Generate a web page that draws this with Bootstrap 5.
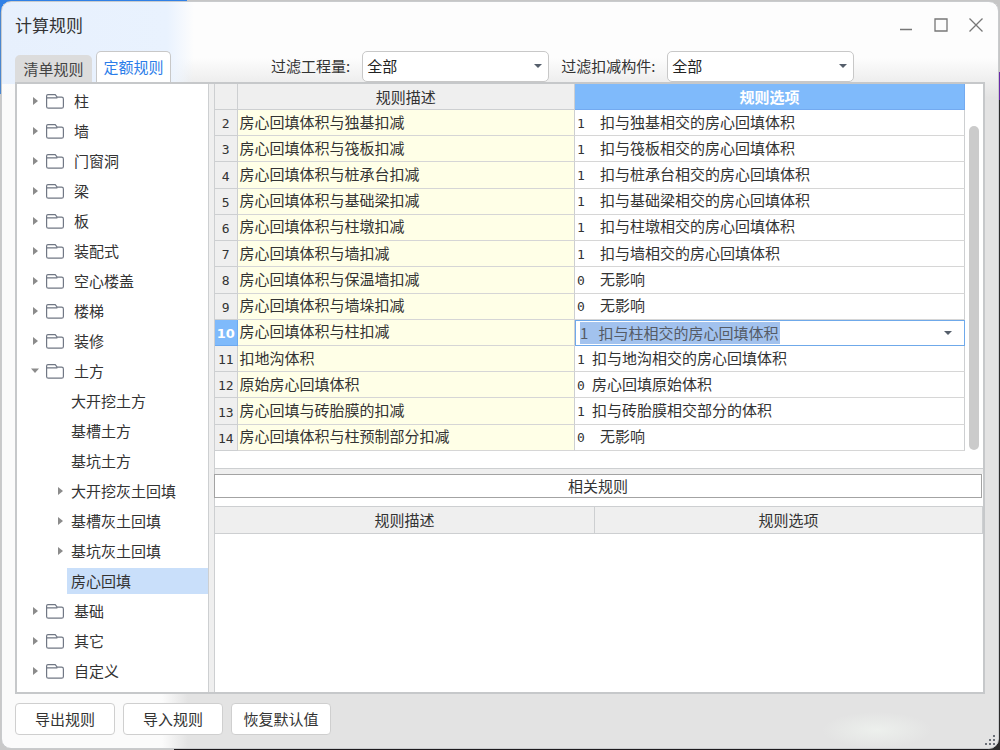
<!DOCTYPE html>
<html lang="zh-CN">
<head>
<meta charset="utf-8">
<meta name="viewport" content="width=device-width, initial-scale=1">
<title>计算规则</title>
<link href="https://cdn.jsdelivr.net/npm/bootstrap@5.3.0/dist/css/bootstrap.min.css" rel="stylesheet">
<style>
:root { --line: #cdcfd1; --frame: #c6c8ca; --head: #efefef; --accent: #7fbafb; --ink: #333; }
body {
  font: 15px/20px "Noto Sans CJK SC", sans-serif; color: var(--ink); min-height: 100vh; padding: 1px;
  background:
    linear-gradient(90deg, #2f80e6 187px, #c6c6c6 187px) top / 100% 12px no-repeat,
    linear-gradient(#4a86cf 88px, #c9c9c9 88px) left / 12px calc(100% - 12px) no-repeat,
    linear-gradient(#c6c6c6 72px, #6a2aa8 72px, #6a2aa8 100px, #2a2a2a 100px) right / 12px 100% no-repeat,
    linear-gradient(90deg, #c9c9c9 174px, #1d1a1d 174px);
}
.dialog-window {
  border: 1px solid #c9cbcd; border-radius: 10px;
  background:
    radial-gradient(closest-side, #edf0ed, rgba(237,240,237,0)) 820px 100% / 110px 36px no-repeat,
    linear-gradient(90deg, #e7f0fd, #e9f2fe 165px, rgba(255,255,255,0) 192px) top left / 200px 60px no-repeat,
    linear-gradient(90deg, #e7f0fd, #e9f2fe 165px, rgba(255,255,255,0) 192px) 0 60px / 200px 22px no-repeat,
    linear-gradient(#fdfdfd 56px, rgba(253,253,253,0) 96px) top / 100% 110px no-repeat,
    linear-gradient(90deg, #fbfbfb 160px, #e3e3e3 186px);
}
.title-row { height: 48px; padding: 0 15px 2px 13px; }
.title-row h1 { font-size: 17px; line-height: 24px; font-weight: 400; }
.win-btn { width: 14px; height: 14px; color: #777; }
.win-btn svg, .tree-row svg { display: block; }
.win-btn svg { width: 14px; height: 14px; }
.win-set { gap: 21px; }
.filter-row { height: 32px; padding: 0 13px; }
.tab-set { width: 256px; }
.rule-tab { height: 27px; padding: 0 8px; border: 0; border-radius: 5px 5px 0 0; background: #dcdcdc; color: #444; width: 77px; white-space: nowrap; }
.rule-tab.active { height: 31px; width: 75px; padding: 0 6px; background: #fff; border: 1px solid #c8c8c8; border-bottom: 0; color: #2b7de9; }
.filter-select { width: 187px; height: 31px; margin: 0 12px; padding: 0 24px 0 4px; border: 1px solid #c8c8c8; border-radius: 5px; font-size: 15px; line-height: 20px; color: #222; background-color: #fff; background-position: right 6px center; background-size: 8px 4px;
  background-image: url("data:image/svg+xml,%3Csvg xmlns='http://www.w3.org/2000/svg' viewBox='0 0 8 4'%3E%3Cpath fill='%23555e6b' d='M0 0h8L4 4z'/%3E%3C/svg%3E"); }
.work-area { margin: 0 13px; border: 2px solid var(--frame); background: var(--head); }
.tree-pane { width: 192px; background: #fff; border-right: 1px solid var(--line); padding-top: 2px; }
.tree-row { height: 30px; padding-left: 14px; color: var(--ink); text-decoration: none; }
.tree-row .arrow { width: 8px; height: 10px; fill: #8b8b8b; }
.tree-row .folder { width: 18px; height: 15px; margin: 0 10px 0 7px; fill: none; stroke: #707784; stroke-width: 1.2; }
.tree-row .kids { margin-left: 25px; margin-right: 7px; }
.tree-row.leaf { padding-left: 50px; }
.tree-row .leaf-text { height: 26px; padding: 3px 0 3px 4px; }
.leaf.selected .leaf-text { background: #c9dffa; }
.pane-right { margin-left: 5px; background: #fff; border-left: 1px solid var(--line); }
.grid-wrap { height: 385px; padding-right: 18px; border-bottom: 1px solid var(--line); }
.rule-grid { width: 100%; height: 367px; table-layout: fixed; border-collapse: separate; border-spacing: 0; line-height: 20px; }
.rule-grid th, .rule-grid td { padding: 0 2px; border-right: 1px solid var(--line); border-bottom: 1px solid #d6d6d6; white-space: nowrap; }
.rule-grid td { padding-bottom: 2px; }
.rule-grid tbody tr { height: 26px; }
.rule-grid thead th { height: 26px; background: var(--head); font-weight: 400; text-align: center; border-bottom-color: var(--line); }
.rule-grid thead th.current { background: var(--accent); color: #fff; font-weight: 700; border-color: #73aaf0; }
.rule-grid tbody th { background: var(--head); font: 13px/16px "DejaVu Sans Mono", monospace; text-align: center; padding: 3px 0 0; border-color: var(--line); }
.rule-grid tbody th.current { background: var(--accent); color: #fff; font-family: "DejaVu Sans", sans-serif; font-weight: 700; border-color: #6ca9f0; }
.rule-grid td.desc { background: #ffffe7; }
.rule-grid td.edit { padding: 0; border: 1px solid #6fa9ea; }
.opt-code { display: inline-block; width: 23px; font: 13px/16px "DejaVu Sans Mono", monospace; }
.opt-code.tight { width: 15px; }
.edit-box { width: 200px; height: 22px; padding: 0; border: 0; outline: 0; background: #a2c2ee; color: #555b66; font-size: 15px; line-height: 20px; white-space: pre; }
.drop-btn { width: 8px; height: 4px; margin-right: 12px; }
.drop-btn svg { display: block; fill: #555e6b; }
.scroll-thumb { top: 42px; right: 4px; width: 10px; height: 324px; border-radius: 5px; background: #cbcbcb; }
.splitter { height: 5px; background: var(--head); }
.related-title { height: 24px; border: 1px solid #a3a3a3; font-size: 15px; line-height: 22px; font-weight: 400; margin: 0 1px 8px -1px; }
.related-grid { width: 100%; table-layout: fixed; border-collapse: separate; border-spacing: 0; }
.related-grid th { height: 28px; padding: 0; background: var(--head); font-weight: 400; text-align: center; border: 1px solid var(--line); border-left: 0; }
.foot-row { padding: 9px 13px 13px; }
.foot-btn { width: 100px; height: 32px; border: 1px solid #cfcfcf; border-radius: 4px; background: #fff; color: var(--ink); padding: 0; }
.size-grip { right: 2px; bottom: 2px; width: 12px; height: 12px; fill: #6b7078; }
</style>
</head>
<body class="d-flex flex-column">
<svg class="d-none">
  <symbol id="folder" viewBox="0 0 18 15"><path d="M.6 3.600V2.100Q.6.700 2 .700h7.200l2 2.400h4.400q1.800 0 1.800 1.800v7.500q0 1.800-1.800 1.800H2.400Q.6 14.200.6 12.400zM.6 3.800h10.800"/></symbol>
  <symbol id="closed" viewBox="0 0 8 10"><path d="M2 1l5 4-5 4z"/></symbol>
  <symbol id="open" viewBox="0 0 8 10"><path d="M0 2.500h8L4 7z"/></symbol>
</svg>
<main class="dialog-window position-relative flex-grow-1 d-flex flex-column">
  <header class="title-row d-flex align-items-center">
    <h1 class="m-0 me-auto">计算规则</h1>
    <div class="win-set d-flex">
      <button class="win-btn btn p-0 border-0 lh-1" aria-label="最小化"><svg viewBox="0 0 14 14"><path d="M1 11.500h12" stroke="currentColor" stroke-width="1.500"/></svg></button>
      <button class="win-btn btn p-0 border-0 lh-1" aria-label="最大化"><svg viewBox="0 0 14 14"><path d="M1 1h12v12H1z" fill="none" stroke="currentColor" stroke-width="1.300"/></svg></button>
      <button class="win-btn btn p-0 border-0 lh-1" aria-label="关闭"><svg viewBox="0 0 14 14"><path d="M.5.5l13 13M13.500.5l-13 13" stroke="currentColor" stroke-width="1.300"/></svg></button>
    </div>
  </header>
  <div class="filter-row d-flex align-items-center">
    <div class="tab-set d-flex gap-1 align-items-end align-self-end" role="tablist">
      <button class="rule-tab" role="tab">清单规则</button>
      <button class="rule-tab active" role="tab" aria-selected="true">定额规则</button>
    </div>
    <label for="qty">过滤工程量:</label>
    <select id="qty" class="form-select filter-select"><option>全部</option></select>
    <label for="part">过滤扣减构件:</label>
    <select id="part" class="form-select filter-select"><option>全部</option></select>
  </div>
  <section class="work-area flex-grow-1 d-flex">
    <nav class="tree-pane flex-shrink-0">
      <a href="#" class="tree-row d-flex align-items-center"><svg class="arrow"><use href="#closed"/></svg><svg class="folder"><use href="#folder"/></svg>柱</a>
      <a href="#" class="tree-row d-flex align-items-center"><svg class="arrow"><use href="#closed"/></svg><svg class="folder"><use href="#folder"/></svg>墙</a>
      <a href="#" class="tree-row d-flex align-items-center"><svg class="arrow"><use href="#closed"/></svg><svg class="folder"><use href="#folder"/></svg>门窗洞</a>
      <a href="#" class="tree-row d-flex align-items-center"><svg class="arrow"><use href="#closed"/></svg><svg class="folder"><use href="#folder"/></svg>梁</a>
      <a href="#" class="tree-row d-flex align-items-center"><svg class="arrow"><use href="#closed"/></svg><svg class="folder"><use href="#folder"/></svg>板</a>
      <a href="#" class="tree-row d-flex align-items-center"><svg class="arrow"><use href="#closed"/></svg><svg class="folder"><use href="#folder"/></svg>装配式</a>
      <a href="#" class="tree-row d-flex align-items-center"><svg class="arrow"><use href="#closed"/></svg><svg class="folder"><use href="#folder"/></svg>空心楼盖</a>
      <a href="#" class="tree-row d-flex align-items-center"><svg class="arrow"><use href="#closed"/></svg><svg class="folder"><use href="#folder"/></svg>楼梯</a>
      <a href="#" class="tree-row d-flex align-items-center"><svg class="arrow"><use href="#closed"/></svg><svg class="folder"><use href="#folder"/></svg>装修</a>
      <a href="#" class="tree-row d-flex align-items-center"><svg class="arrow"><use href="#open"/></svg><svg class="folder"><use href="#folder"/></svg>土方</a>
      <a href="#" class="tree-row leaf d-flex align-items-center"><span class="leaf-text">大开挖土方</span></a>
      <a href="#" class="tree-row leaf d-flex align-items-center"><span class="leaf-text">基槽土方</span></a>
      <a href="#" class="tree-row leaf d-flex align-items-center"><span class="leaf-text">基坑土方</span></a>
      <a href="#" class="tree-row d-flex align-items-center"><svg class="arrow kids"><use href="#closed"/></svg>大开挖灰土回填</a>
      <a href="#" class="tree-row d-flex align-items-center"><svg class="arrow kids"><use href="#closed"/></svg>基槽灰土回填</a>
      <a href="#" class="tree-row d-flex align-items-center"><svg class="arrow kids"><use href="#closed"/></svg>基坑灰土回填</a>
      <a href="#" class="tree-row leaf selected d-flex align-items-center"><span class="leaf-text flex-grow-1">房心回填</span></a>
      <a href="#" class="tree-row d-flex align-items-center"><svg class="arrow"><use href="#closed"/></svg><svg class="folder"><use href="#folder"/></svg>基础</a>
      <a href="#" class="tree-row d-flex align-items-center"><svg class="arrow"><use href="#closed"/></svg><svg class="folder"><use href="#folder"/></svg>其它</a>
      <a href="#" class="tree-row d-flex align-items-center"><svg class="arrow"><use href="#closed"/></svg><svg class="folder"><use href="#folder"/></svg>自定义</a>
    </nav>
    <div class="pane-right flex-grow-1 d-flex flex-column">
      <div class="grid-wrap position-relative">
        <table class="rule-grid">
          <colgroup><col style="width:3%"><col style="width:45%"><col style="width:52%"></colgroup>
          <thead><tr><th></th><th>规则描述</th><th class="current">规则选项</th></tr></thead>
          <tbody>
            <tr><th>2</th><td class="desc">房心回填体积与独基扣减</td><td><span class="opt-code">1</span>扣与独基相交的房心回填体积</td></tr>
            <tr><th>3</th><td class="desc">房心回填体积与筏板扣减</td><td><span class="opt-code">1</span>扣与筏板相交的房心回填体积</td></tr>
            <tr><th>4</th><td class="desc">房心回填体积与桩承台扣减</td><td><span class="opt-code">1</span>扣与桩承台相交的房心回填体积</td></tr>
            <tr><th>5</th><td class="desc">房心回填体积与基础梁扣减</td><td><span class="opt-code">1</span>扣与基础梁相交的房心回填体积</td></tr>
            <tr><th>6</th><td class="desc">房心回填体积与柱墩扣减</td><td><span class="opt-code">1</span>扣与柱墩相交的房心回填体积</td></tr>
            <tr><th>7</th><td class="desc">房心回填体积与墙扣减</td><td><span class="opt-code">1</span>扣与墙相交的房心回填体积</td></tr>
            <tr><th>8</th><td class="desc">房心回填体积与保温墙扣减</td><td><span class="opt-code">0</span>无影响</td></tr>
            <tr><th>9</th><td class="desc">房心回填体积与墙垛扣减</td><td><span class="opt-code">0</span>无影响</td></tr>
            <tr><th class="current">10</th><td class="desc">房心回填体积与柱扣减</td><td class="edit"><div class="d-flex align-items-center justify-content-between ps-1"><input class="edit-box" aria-label="规则选项" value="1   扣与柱相交的房心回填体积"><button class="drop-btn btn p-0 border-0" aria-label="展开选项"><svg width="8" height="4"><path d="M0 0h8L4 4z"/></svg></button></div></td></tr>
            <tr><th>11</th><td class="desc">扣地沟体积</td><td><span class="opt-code tight">1</span>扣与地沟相交的房心回填体积</td></tr>
            <tr><th>12</th><td class="desc">原始房心回填体积</td><td><span class="opt-code tight">0</span>房心回填原始体积</td></tr>
            <tr><th>13</th><td class="desc">房心回填与砖胎膜的扣减</td><td><span class="opt-code tight">1</span>扣与砖胎膜相交部分的体积</td></tr>
            <tr><th>14</th><td class="desc">房心回填体积与柱预制部分扣减</td><td><span class="opt-code">0</span>无影响</td></tr>
          </tbody>
        </table>
        <div class="scroll-thumb position-absolute"></div>
      </div>
      <div class="splitter"></div>
      <h2 class="related-title text-center">相关规则</h2>
      <table class="related-grid">
        <colgroup><col style="width:49.500%"><col></colgroup>
        <thead><tr><th>规则描述</th><th>规则选项</th></tr></thead>
      </table>
    </div>
  </section>
  <footer class="foot-row d-flex gap-2">
    <button class="foot-btn">导出规则</button>
    <button class="foot-btn">导入规则</button>
    <button class="foot-btn">恢复默认值</button>
  </footer>
  <svg class="size-grip position-absolute" viewBox="0 0 12 12"><path d="M9 1h2v2H9zM5 5h2v2H5zM9 5h2v2H9zM1 9h2v2H1zM5 9h2v2H5zM9 9h2v2H9z"/></svg>
</main>
<script src="https://cdn.jsdelivr.net/npm/bootstrap@5.3.0/dist/js/bootstrap.bundle.min.js"></script>
</body>
</html>
